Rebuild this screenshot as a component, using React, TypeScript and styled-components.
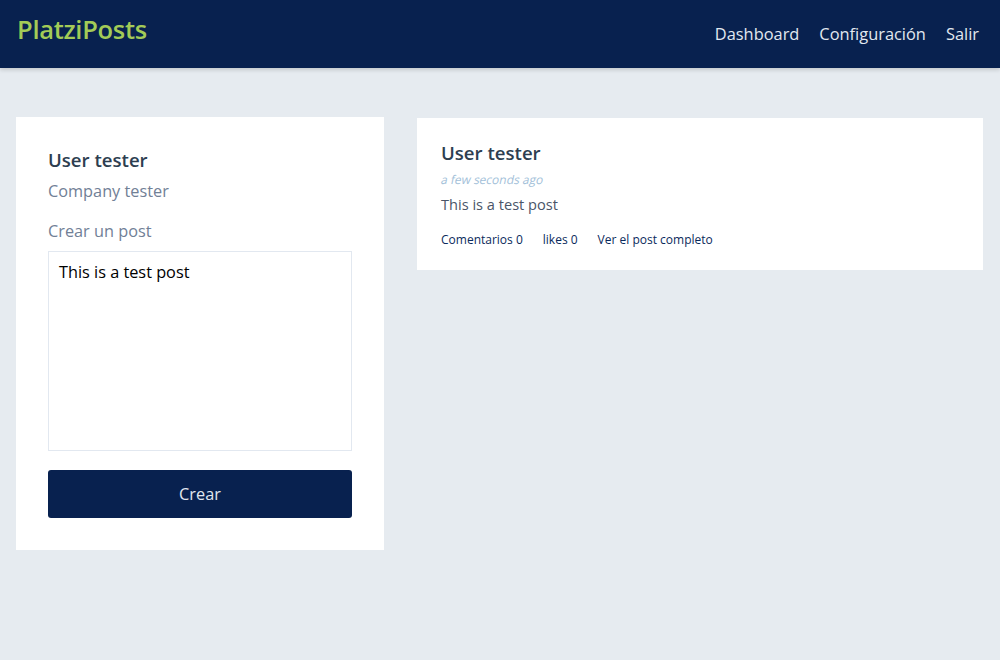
import React from "react";
import styled, { createGlobalStyle } from "styled-components";

const Global = createGlobalStyle`
  html, body { margin: 0; padding: 0; }
  body {
    background: #e6ebf0;
    font-family: "Open Sans", "Noto Sans", sans-serif;
    min-height: 660px;
  }
  * { box-sizing: border-box; }
`;

const Header = styled.header`
  height: 68px;
  background: #08214f;
  display: flex;
  align-items: center;
  justify-content: space-between;
  padding: 0 21px 2px 17px;
  box-shadow: 0 2px 4px rgba(0, 0, 0, 0.15);
`;

const Brand = styled.h1`
  margin: 0 0 8px 0;
  font-size: 25.5px;
  font-weight: 600;
  color: #a3cb57;
  letter-spacing: -0.3px;
`;

const Nav = styled.nav`
  display: flex;
  gap: 20px;
`;

const NavLink = styled.a`
  color: #e2e8f0;
  font-size: 16.4px;
  text-decoration: none;
`;

const Main = styled.main`
  display: grid;
  grid-template-columns: 368px 1fr;
  column-gap: 33px;
  align-items: start;
  padding: 49px 17px 0 16px;
`;

const Card = styled.section<{ $pad: string; $offset?: number }>`
  background: #ffffff;
  padding: ${(p) => p.$pad};
  margin-top: ${(p) => p.$offset ?? 0}px;
  display: flex;
  flex-direction: column;
  align-items: flex-start;
`;

const Name = styled.h2`
  margin: 0;
  font-size: 18.6px;
  line-height: 22px;
  font-weight: 600;
  color: #2d3e50;
`;

const Muted = styled.p<{ $top: number }>`
  margin: ${(p) => p.$top}px 0 0 0;
  font-size: 16.3px;
  line-height: 20px;
  color: #718096;
`;

const TextArea = styled.textarea`
  margin-top: 10px;
  width: 100%;
  height: 200px;
  border: 1px solid #e2e8f0;
  padding: 9px 10px;
  font-family: "Open Sans", sans-serif;
  font-size: 16.3px;
  line-height: 22px;
  color: #000;
  resize: none;
  outline: none;
`;

const Button = styled.button`
  margin-top: 19px;
  height: 48px;
  width: 100%;
  border: none;
  border-radius: 3px;
  background: #08214f;
  color: #e2e8f0;
  font-family: "Open Sans", sans-serif;
  font-size: 16.3px;
`;

const Time = styled.span`
  display: inline-block;
  margin-top: 8px;
  font-size: 12px;
  line-height: 16px;
  font-style: normal;
  transform: skewX(-12deg);
  transform-origin: left center;
  color: #a3bfd9;
`;

const Body = styled.p`
  margin: 6px 0 0 0;
  font-size: 14.6px;
  line-height: 20px;
  color: #4a5568;
`;

const Links = styled.div`
  display: flex;
  gap: 20px;
  margin-top: 18px;
`;

const SmallLink = styled.a`
  font-size: 12px;
  line-height: 16px;
  color: #0a2a5c;
  text-decoration: none;
`;

export default function App() {
  return (
    <>
      <Global />
      <Header>
        <Brand>PlatziPosts</Brand>
        <Nav>
          <NavLink>Dashboard</NavLink>
          <NavLink>Configuración</NavLink>
          <NavLink>Salir</NavLink>
        </Nav>
      </Header>
      <Main>
        <Card $pad="32px">
          <Name>User tester</Name>
          <Muted $top={10}>Company tester</Muted>
          <Muted $top={20}>Crear un post</Muted>
          <TextArea defaultValue="This is a test post" />
          <Button>Crear</Button>
        </Card>
        <Card $pad="24px 24px 22px" $offset={1}>
          <Name>User tester</Name>
          <Time>a few seconds ago</Time>
          <Body>This is a test post</Body>
          <Links>
            <SmallLink>Comentarios 0</SmallLink>
            <SmallLink>likes 0</SmallLink>
            <SmallLink>Ver el post completo</SmallLink>
          </Links>
        </Card>
      </Main>
    </>
  );
}
